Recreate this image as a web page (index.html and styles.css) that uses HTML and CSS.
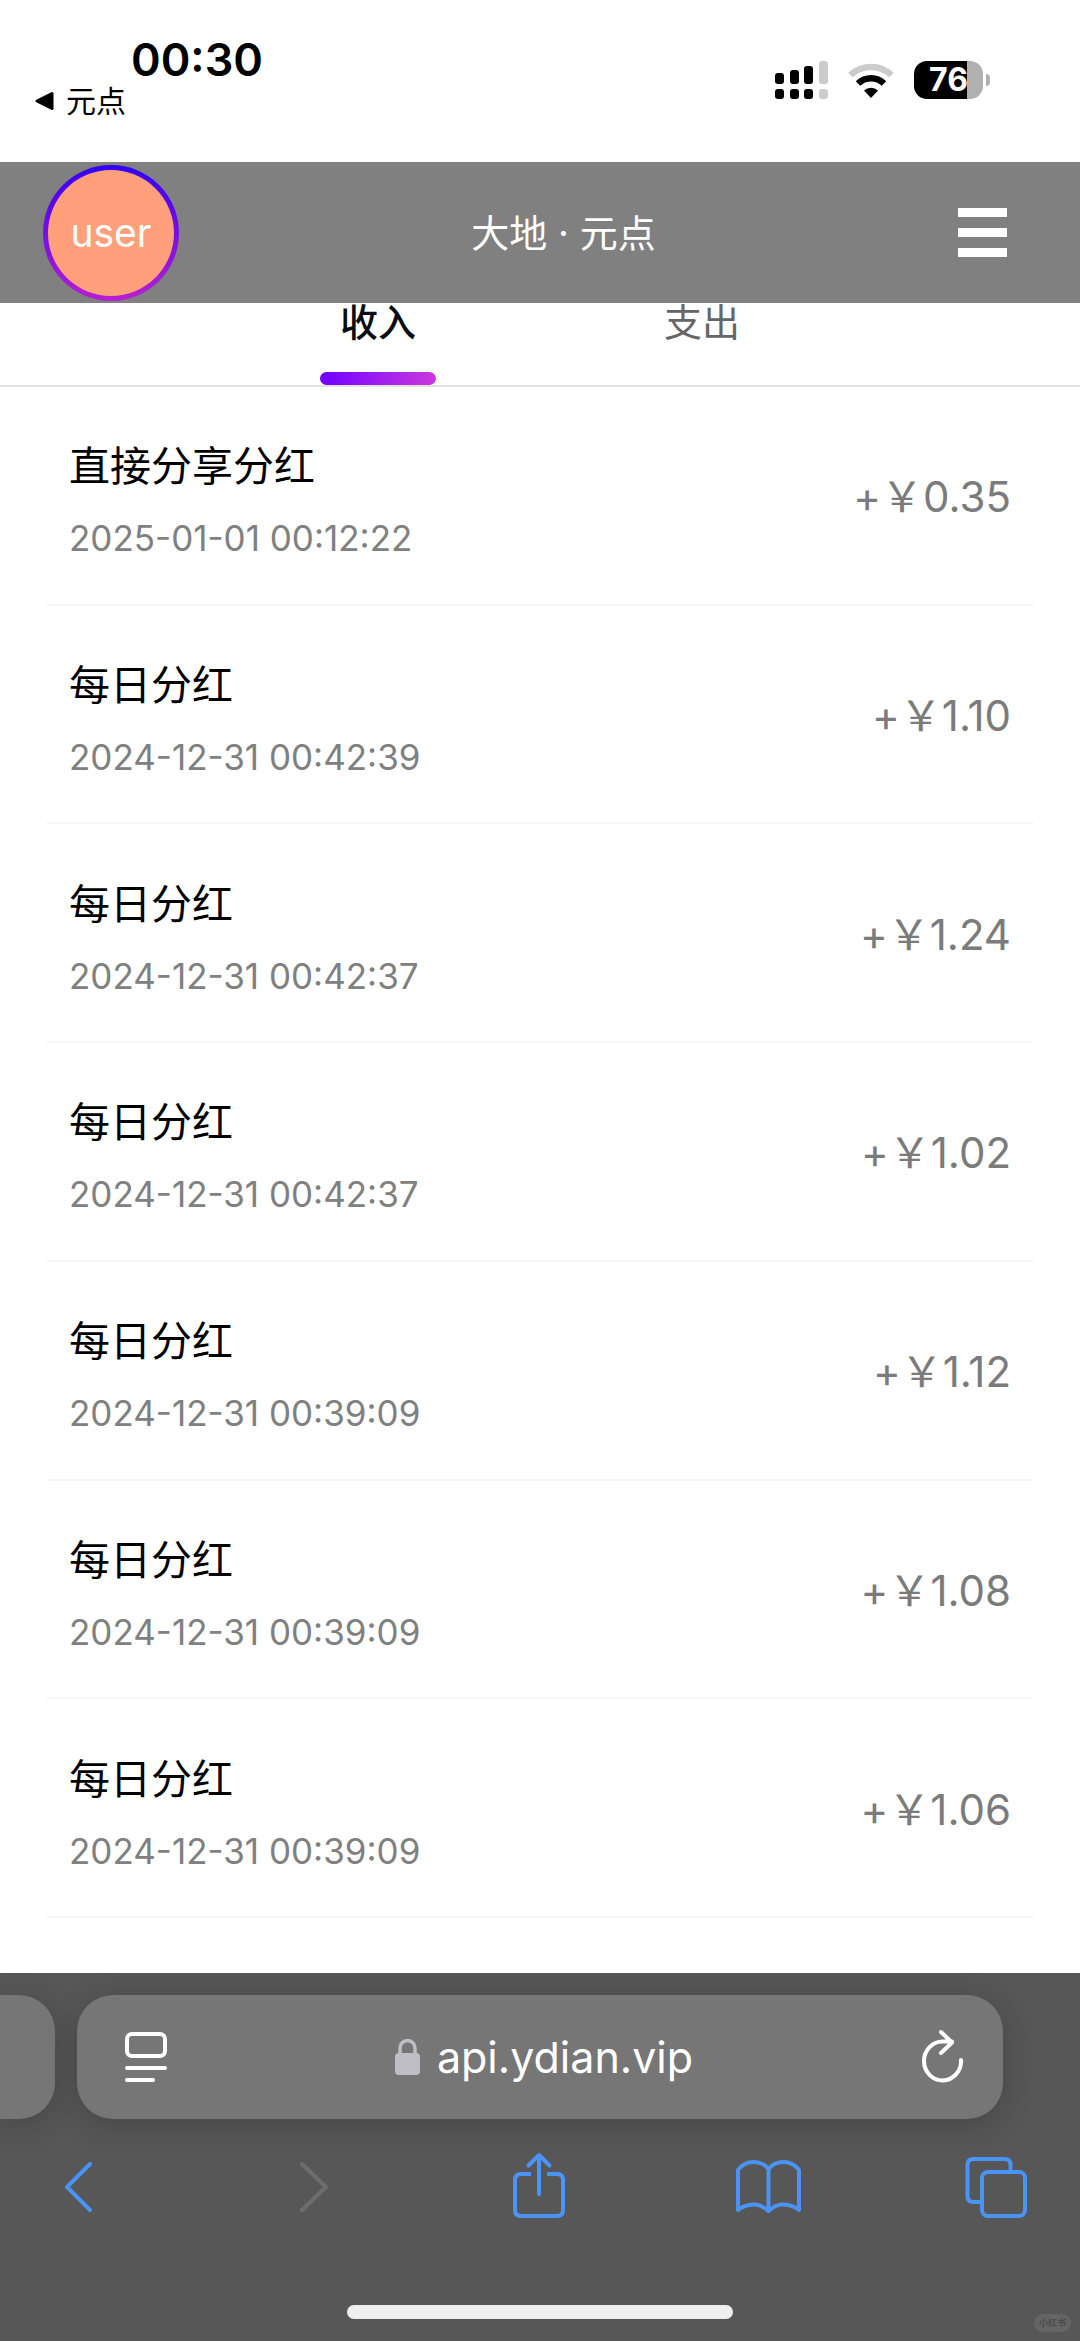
FILE: index.html
```html
<!DOCTYPE html>
<html lang="zh-CN">
<head>
<meta charset="utf-8">
<meta name="viewport" content="width=device-width, initial-scale=1">
<title>大地 · 元点</title>
<link rel="stylesheet" href="styles.css">
</head>
<body>
<div class="screen">
  <div class="status">
    <div class="status-left">
      <time class="clock">00:30</time>
      <a class="return" href="#">
        <svg width="20" height="20" viewBox="0 0 20 20" aria-hidden="true"><path d="M17 2.500V17.500L2 10Z" fill="#000" stroke="#000" stroke-width="3" stroke-linejoin="round"/></svg>
        <span>元点</span>
      </a>
    </div>
    <div class="status-right">
      <svg width="53" height="38" viewBox="0 0 53 38" aria-hidden="true">
        <g fill="#000"><rect y="12" width="9" height="11" rx="3"/><rect x="15" y="9" width="9" height="14" rx="3"/><rect x="29" y="5" width="9" height="18" rx="3"/><rect y="28" width="9" height="10" rx="3"/><rect x="15" y="28" width="9" height="10" rx="3"/><rect x="29" y="28" width="9" height="10" rx="3"/></g>
        <g fill="#ccc"><rect x="44" width="9" height="23" rx="3"/><rect x="44" y="28" width="9" height="10" rx="3"/></g>
      </svg>
      <svg width="46" height="36" viewBox="0 0 46 36" aria-hidden="true">
        <path d="M2.500 13A30 30 0 0 1 43.500 13" fill="none" stroke="#ccc" stroke-width="6.500"/>
        <path d="M10 21.500A19 19 0 0 1 36 21.500" fill="none" stroke="#000" stroke-width="6.500"/>
        <path d="M16 28.500A10.500 10.500 0 0 1 30 28.500L23 36Z" fill="#000"/>
      </svg>
      <div class="battery"><span class="battery-body">76</span><span class="battery-cap"></span></div>
    </div>
  </div>

  <header class="header">
    <a class="avatar" href="#">user</a>
    <h1 class="title">大地 · 元点</h1>
    <button class="menu" type="button" aria-label="菜单"><span></span><span></span><span></span></button>
  </header>

  <nav class="tabs">
    <button class="tab tab-active" type="button">收入</button>
    <button class="tab" type="button">支出</button>
  </nav>

  <ul class="list">
    <li class="row"><div><h2 class="name">直接分享分红</h2><p class="date">2025-01-01 00:12:22</p></div><p class="amount">+￥0.35</p></li>
    <li class="row"><div><h2 class="name">每日分红</h2><p class="date">2024-12-31 00:42:39</p></div><p class="amount">+￥1.10</p></li>
    <li class="row"><div><h2 class="name">每日分红</h2><p class="date">2024-12-31 00:42:37</p></div><p class="amount">+￥1.24</p></li>
    <li class="row"><div><h2 class="name">每日分红</h2><p class="date">2024-12-31 00:42:37</p></div><p class="amount">+￥1.02</p></li>
    <li class="row"><div><h2 class="name">每日分红</h2><p class="date">2024-12-31 00:39:09</p></div><p class="amount">+￥1.12</p></li>
    <li class="row"><div><h2 class="name">每日分红</h2><p class="date">2024-12-31 00:39:09</p></div><p class="amount">+￥1.08</p></li>
    <li class="row"><div><h2 class="name">每日分红</h2><p class="date">2024-12-31 00:39:09</p></div><p class="amount">+￥1.06</p></li>
  </ul>

  <footer class="browser">
    <div class="address-row">
      <div class="next-page"></div>
      <div class="address">
        <button class="address-button" type="button" aria-label="页面设置">
          <svg width="42" height="52" viewBox="0 0 42 52" fill="none" stroke="#fff" stroke-width="4" stroke-linecap="round" aria-hidden="true"><rect x="2" y="3" width="38" height="22" rx="5"/><path d="M2 37H40M2 49H28"/></svg>
        </button>
        <button class="url" type="button">
          <svg width="26" height="38" viewBox="0 0 26 38" aria-hidden="true"><rect y="15" width="25" height="22" rx="4" fill="#bfbec7"/><path d="M5 17V10a7.500 7.500 0 0 1 15 0v7" fill="none" stroke="#bfbec7" stroke-width="3.500"/></svg>
          <span>api.ydian.vip</span>
        </button>
        <button class="address-button" type="button" aria-label="重新载入">
          <svg width="42" height="52" viewBox="0 0 42 52" fill="none" stroke="#fff" stroke-width="4" stroke-linecap="round" stroke-linejoin="round" aria-hidden="true"><path d="M40 29A18.500 19.500 0 1 1 21.500 10.500H31M20 1L31 11.500L20 22"/></svg>
        </button>
      </div>
    </div>
    <div class="toolbar">
      <button class="tool" type="button" aria-label="后退"><svg width="64" height="72" viewBox="0 0 64 72"><path d="M44 14L21 37L44 60"/></svg></button>
      <button class="tool tool-off" type="button" aria-label="前进" disabled><svg width="64" height="72" viewBox="0 0 64 72"><path d="M26 14L50 37L26 60"/></svg></button>
      <button class="tool" type="button" aria-label="分享"><svg width="64" height="72" viewBox="0 0 64 72"><path d="M26 24H16Q10 24 10 30V60Q10 66 16 66H52Q58 66 58 60V30Q58 24 52 24H42" stroke-linecap="butt"/><path d="M34 44V5M23.500 15.500L34 5L44.500 15.500"/></svg></button>
      <button class="tool" type="button" aria-label="书签"><svg width="64" height="72" viewBox="0 0 64 72"><path d="M33.500 19V61Q26 54 18.500 54.500Q9 55 3 60V20Q9 12 18.500 12Q28 12 33.500 19Q39 12 48.500 12Q58 12 64 20V60Q58 55 48.500 54.500Q41 54 33.500 61"/></svg></button>
      <button class="tool" type="button" aria-label="标签页"><svg width="64" height="72" viewBox="0 0 64 72"><rect x="18" y="22" width="43" height="44" rx="6"/><path d="M46.500 21V15Q46.500 9 40.500 9H9.500Q3.500 9 3.500 15V46Q3.500 52 9.500 52H17" stroke-linecap="butt"/></svg></button>
    </div>
    <div class="home"></div>
    <span class="mark">小红书</span>
  </footer>
</div>
</body>
</html>
```
FILE: styles.css
```css
* { box-sizing: border-box; }

body, h1, h2, p, ul { margin: 0; padding: 0; }

body {
  font-family: Inter, "Noto Sans CJK SC", sans-serif;
  background: #fff;
  color: #000;
}

button {
  margin: 0;
  padding: 0;
  border: 0;
  background: none;
  font: inherit;
  color: inherit;
}

a { color: inherit; text-decoration: none; }

svg { display: block; overflow: visible; }

.screen {
  min-height: 100vh;
  display: flex;
  flex-direction: column;
}

/* Status bar */
.status {
  display: flex;
  justify-content: space-between;
  height: 162px;
  padding: 36px 90px 0 35px;
}

.status-left { display: flex; flex-direction: column; }

.clock {
  padding-left: 96px;
  font-size: 45px;
  font-weight: 600;
  line-height: 48px;
}

.return {
  display: flex;
  align-items: center;
  gap: 11px;
  font-size: 30px;
  line-height: 34px;
}

.status-right {
  display: flex;
  align-items: center;
  align-self: flex-start;
  gap: 20px;
  padding-top: 25px;
}

.battery { display: flex; align-items: center; gap: 3px; }

.battery-body {
  width: 69px;
  border-radius: 13px;
  background: linear-gradient(90deg, #000 53px, #b0b0b0 53px);
  color: #fff;
  font-size: 32px;
  font-weight: 700;
  line-height: 38px;
  text-align: center;
}

.battery-cap {
  width: 4px;
  height: 12px;
  border-radius: 0 4px 4px 0;
  background: #b0b0b0;
}

/* Page header */
.header {
  display: flex;
  align-items: center;
  justify-content: space-between;
  height: 141px;
  padding: 0 73px 0 43px;
  background: #808080;
  color: #fff;
}

.avatar {
  width: 136px;
  height: 136px;
  border: 5px solid transparent;
  border-radius: 50%;
  background: linear-gradient(#ff9f7c, #ff9f7c) padding-box, linear-gradient(#3400f4, #b81fd2) border-box;
  font-size: 39px;
  line-height: 126px;
  text-align: center;
}

.title { font-size: 38px; font-weight: 400; line-height: 48px; }

.menu {
  display: flex;
  flex-direction: column;
  gap: 11px;
  padding-left: 10px;
}

.menu span { width: 49px; height: 9px; background: #fff; }

/* Tabs */
.tabs {
  display: flex;
  justify-content: center;
  border-bottom: 2px solid #e2e2e2;
}

.tab {
  display: flex;
  flex-direction: column;
  align-items: center;
  gap: 31px;
  width: 30%;
  color: #666;
  font-size: 38px;
  line-height: 38px;
}

.tab-active { color: #0c0c14; font-weight: 500; }

.tab::after {
  content: "";
  width: 116px;
  height: 13px;
  border-radius: 7px;
}

.tab-active::after { background: linear-gradient(90deg, #7000ff, #cb38de); }

/* Records */
.list {
  flex: 1;
  display: grid;
  grid-auto-rows: 1fr;
  padding: 0 46px 55px;
  list-style: none;
}

.row {
  display: flex;
  align-items: center;
  justify-content: space-between;
  padding: 14px 23px 0;
  border-bottom: 2px solid #f6f6f6;
}

.name { font-size: 41px; font-weight: 400; line-height: 72px; }

.date { color: #808080; font-size: 35px; line-height: 72px; }

.amount {
  padding-bottom: 10px;
  color: #7b7b7b;
  font-size: 42px;
  line-height: 60px;
}

/* Browser controls */
.browser {
  position: relative;
  padding: 22px 0;
  background: #575757;
}

.address-row { display: flex; gap: 22px; padding-right: 77px; }

.next-page, .address {
  background: #767676;
  box-shadow: 0 6px 32px rgba(0, 0, 0, 0.2);
}

.next-page { width: 55px; border-radius: 0 36px 36px 0; }

.address {
  flex: 1;
  display: flex;
  align-items: center;
  justify-content: space-between;
  height: 124px;
  padding: 0 40px 0 48px;
  border-radius: 36px;
  color: #fff;
}

.url {
  display: flex;
  align-items: center;
  gap: 16px;
  font-size: 43px;
  line-height: 60px;
}

.toolbar {
  display: flex;
  justify-content: space-between;
  padding: 31px 52px 0 46px;
}

.tool svg {
  fill: none;
  stroke: #4a94f8;
  stroke-width: 4;
  stroke-linecap: round;
  stroke-linejoin: round;
}

.tool-off svg { stroke: #6d6d6d; }

.home {
  width: 386px;
  height: 14px;
  margin: 83px auto 0;
  border-radius: 7px;
  background: #efefef;
}

.mark {
  position: absolute;
  right: 9px;
  bottom: 9px;
  padding: 0 5px;
  border-radius: 9px;
  background: #656565;
  color: #4c4c4c;
  font-size: 9px;
  font-weight: 700;
  line-height: 18px;
}
```
